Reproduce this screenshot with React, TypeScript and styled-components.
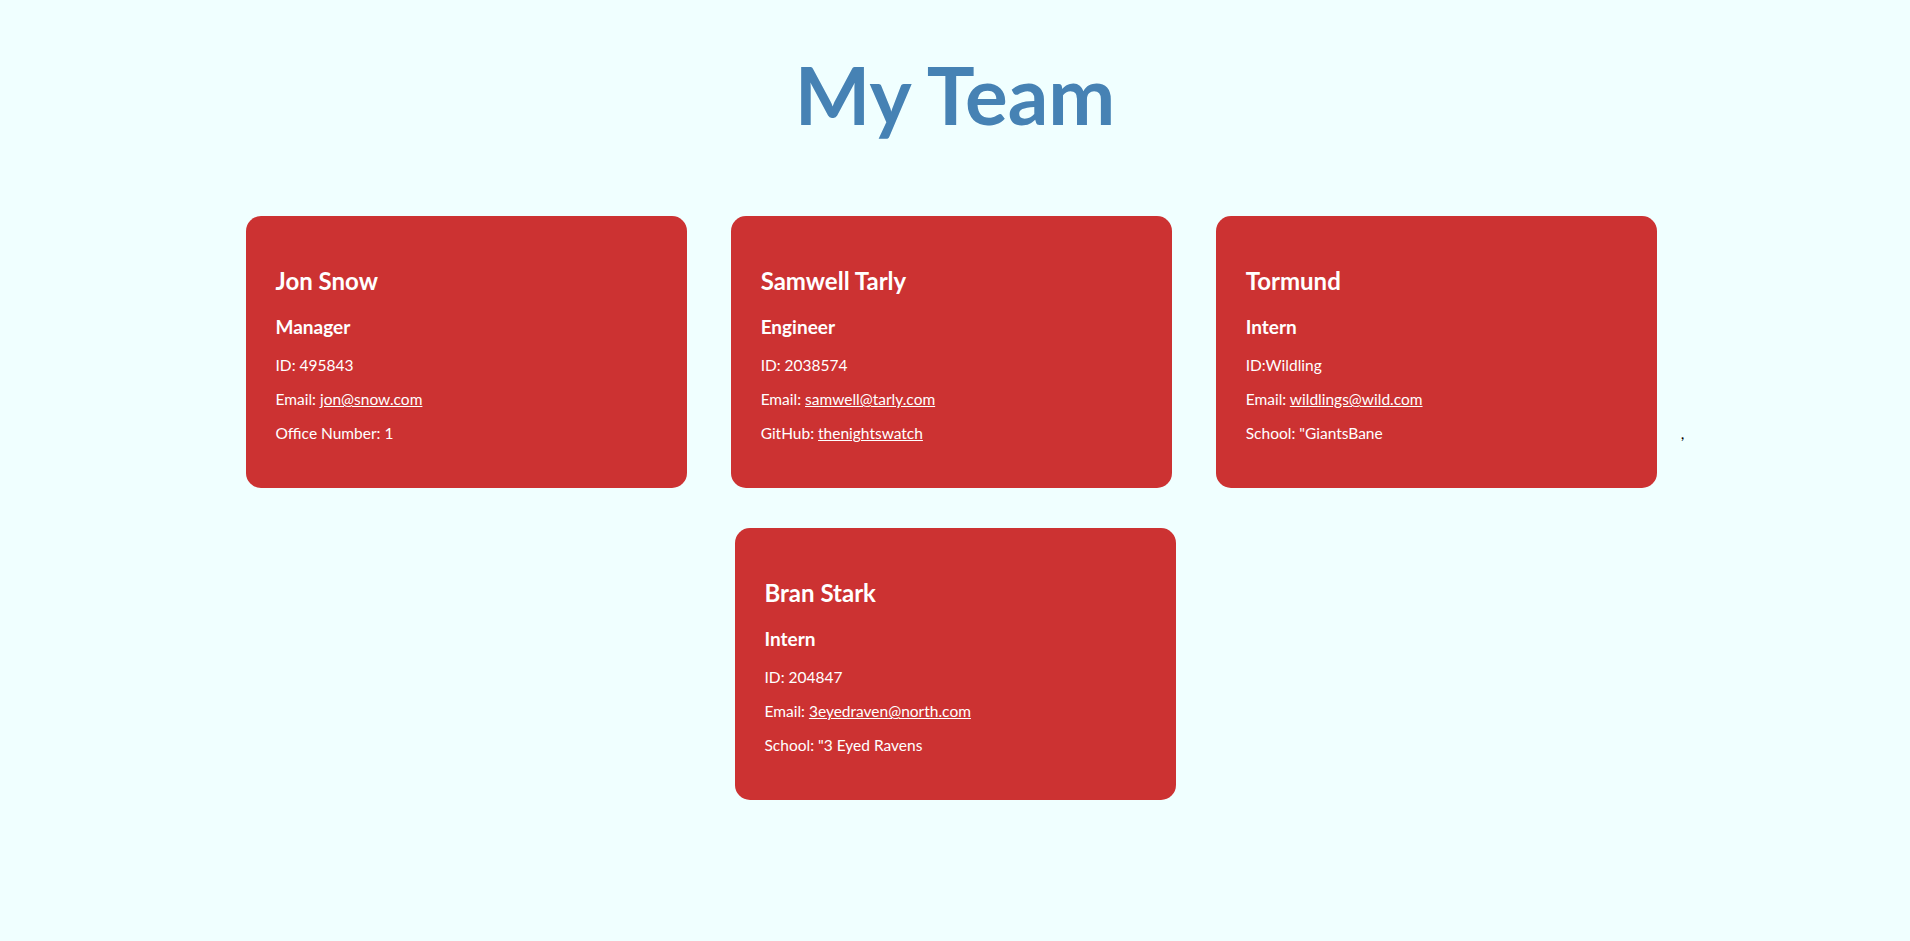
import React from "react";
import styled, { createGlobalStyle } from "styled-components";

const GlobalStyle = createGlobalStyle`
  html, body {
    margin: 0;
    padding: 0;
    background: #f0ffff;
  }
  body {
    font-family: "Lato", "Open Sans", sans-serif;
    font-size: 16px;
    color: #000;
  }
`;

const Page = styled.div`
  min-height: 941px;
  background: #f0ffff;
`;

const Header = styled.header`
  padding-top: 46px;
  text-align: center;
`;

const Title = styled.h1`
  margin: 0;
  font-size: 80px;
  line-height: 96px;
  font-weight: 700;
  color: #4682b4;
  letter-spacing: 0;
`;

const Team = styled.main`
  margin-top: 54px;
  text-align: center;
`;

const Card = styled.div`
  display: inline-block;
  vertical-align: baseline;
  width: 381px;
  padding: 30px;
  margin: 20px;
  background: #cc3232;
  border-radius: 15px;
  color: #fff;
  text-align: left;
`;

const Name = styled.h2`
  margin: 20px 0;
  font-size: 24px;
  font-weight: 700;
`;

const Role = styled.h3`
  margin: 18px 0;
  font-size: 19px;
  font-weight: 700;
`;

const Line = styled.p`
  margin: 16px 0;
  font-size: 15.5px;
`;

const Link = styled.a`
  color: #fff;
  text-decoration: underline;
`;

type Member = {
  name: string;
  role: string;
  id: string;
  email: string;
  extraLabel: string;
  extra: string;
  extraLink?: boolean;
};

const MemberCard = ({ m }: { m: Member }) => (
  <Card>
    <Name>{m.name}</Name>
    <Role>{m.role}</Role>
    <Line>{m.id}</Line>
    <Line>
      Email: <Link href={`mailto:${m.email}`}>{m.email}</Link>
    </Line>
    <Line>
      {m.extraLabel}{" "}
      {m.extraLink ? <Link href="#">{m.extra}</Link> : m.extra}
    </Line>
  </Card>
);

const members: Member[] = [
  { name: "Jon Snow", role: "Manager", id: "ID: 495843", email: "jon@snow.com", extraLabel: "Office Number:", extra: "1" },
  { name: "Samwell Tarly", role: "Engineer", id: "ID: 2038574", email: "samwell@tarly.com", extraLabel: "GitHub:", extra: "thenightswatch", extraLink: true },
  { name: "Tormund", role: "Intern", id: "ID:Wildling", email: "wildlings@wild.com", extraLabel: "School:", extra: "\"GiantsBane" },
  { name: "Bran Stark", role: "Intern", id: "ID: 204847", email: "3eyedraven@north.com", extraLabel: "School:", extra: "\"3 Eyed Ravens" },
];

export default function App() {
  return (
    <Page>
      <GlobalStyle />
      <Header>
        <Title>My Team</Title>
      </Header>
      <Team>
        <MemberCard m={members[0]} /> <MemberCard m={members[1]} />{" "}
        <MemberCard m={members[2]} /> , <MemberCard m={members[3]} />
      </Team>
    </Page>
  );
}
